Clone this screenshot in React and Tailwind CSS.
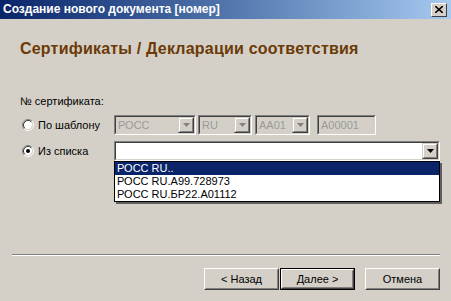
import React from "react";

function Radio({ checked }) {
  return (
    <svg width="12" height="12" viewBox="0 0 12 12" className="shrink-0">
      <circle cx="6" cy="6" r="4.2" fill="#ffffff" />
      <path d="M2.11 9.89 A5.5 5.5 0 0 1 9.89 2.11" stroke="#808080" fill="none" />
      <path d="M9.89 2.11 A5.5 5.5 0 0 1 2.11 9.89" stroke="#ffffff" fill="none" />
      <path d="M2.82 9.18 A4.5 4.5 0 0 1 9.18 2.82" stroke="#404040" fill="none" />
      <path d="M9.18 2.82 A4.5 4.5 0 0 1 2.82 9.18" stroke="#d4d0c8" fill="none" />
      {checked && <circle cx="6" cy="6" r="2" fill="#000000" />}
    </svg>
  );
}

function ArrowBtn({ disabled }) {
  return (
    <div className="w-[16px] h-full border border-t-[#d4d0c8] border-l-[#d4d0c8] border-b-[#404040] border-r-[#404040] shrink-0">
      <div className="w-full h-full bg-[#d4d0c8] border border-t-white border-l-white border-b-[#808080] border-r-[#808080] flex items-center justify-center">
        <svg width="7" height="4" viewBox="0 0 7 4">
          <path d="M0 0 H7 L3.5 4 Z" fill={disabled ? "#808080" : "#000000"} />
        </svg>
      </div>
    </div>
  );
}

function Sunken({ className = "", children, bg = "bg-white" }) {
  return (
    <div className={`h-[20px] border border-t-[#808080] border-l-[#808080] border-b-white border-r-white ${className}`}>
      <div className={`w-full h-full border border-t-[#404040] border-l-[#404040] border-b-[#d4d0c8] border-r-[#d4d0c8] ${bg} flex`}>
        {children}
      </div>
    </div>
  );
}

function DisabledCombo({ w, text }) {
  return (
    <Sunken className={w} bg="bg-[#d4d0c8]">
      <span className="flex-1 pl-[2px] leading-[16px] text-[#9a9a9a]">{text}</span>
      <ArrowBtn disabled />
    </Sunken>
  );
}

function Btn({ children, def }) {
  const inner = (
    <div className="w-full h-full border border-t-white border-l-white border-b-[#404040] border-r-[#404040]">
      <div className="w-full h-full border border-t-[#d4d0c8] border-l-[#d4d0c8] border-b-[#808080] border-r-[#808080] flex items-center justify-center text-black">
        {children}
      </div>
    </div>
  );
  if (def) {
    return <div className="w-[75px] h-[22px] border border-black">{inner}</div>;
  }
  return <div className="w-[75px] h-[22px]">{inner}</div>;
}

export default function App() {
  return (
    <div className="w-[451px] h-[301px] bg-[#d4d0c8] flex flex-col overflow-hidden font-['Liberation_Sans',Arial,sans-serif] text-[11px] text-black">
      <div className="h-[19px] flex items-center justify-between bg-linear-to-r from-[#0a246a] to-[#a6caf0] pl-[3px] pr-[4px] shrink-0">
        <span className="text-white font-bold text-[12px] leading-[19px]">Создание нового документа [номер]</span>
        <div className="w-[16px] h-[14px] border border-t-white border-l-white border-b-[#404040] border-r-[#404040] bg-[#d4d0c8] flex items-center justify-center">
          <svg width="8" height="7" viewBox="0 0 8 7">
            <path d="M0 0 L8 7 M8 0 L0 7" stroke="#000" strokeWidth="1.6" />
          </svg>
        </div>
      </div>

      <div className="pl-[20px] pr-[10px] flex flex-col">
        <div className="mt-[21px] h-[18px] leading-[18px] text-[16px] tracking-[0.2px] font-bold text-[#6b3a07]">
          Сертификаты / Декларации соответствия
        </div>
        <div className="mt-[37px] h-[13px] leading-[13px]">№ сертификата:</div>

        <div className="mt-[7px] flex items-center h-[20px]">
          <div className="w-[94px] flex items-center pl-[2px] gap-[4px]">
            <Radio />
            <span>По шаблону</span>
          </div>
          <DisabledCombo w="w-[82px]" text="РОСС" />
          <div className="w-[2px]" />
          <DisabledCombo w="w-[54px]" text="RU" />
          <div className="w-[3px]" />
          <DisabledCombo w="w-[55px]" text="AA01" />
          <div className="w-[7px]" />
          <Sunken className="w-[59px]" bg="bg-[#d4d0c8]">
            <span className="flex-1 pl-[2px] leading-[16px] text-[#9a9a9a]">A00001</span>
          </Sunken>
        </div>

        <div className="mt-[6px] flex items-center h-[20px]">
          <div className="w-[94px] flex items-center pl-[2px] gap-[4px]">
            <Radio checked />
            <span>Из списка</span>
          </div>
          <div className="relative w-[326px]">
            <Sunken className="w-full">
              <span className="flex-1" />
              <ArrowBtn />
            </Sunken>
            <div className="absolute left-0 top-full w-full bg-white border border-black shadow-[2px_2px_0_#606060] flex flex-col leading-[13px]">
              <div className="bg-[#0a246a] text-white pl-[2px] h-[13px]">РОСС RU..</div>
              <div className="pl-[2px] h-[13px]">РОСС RU.A99.728973</div>
              <div className="pl-[2px] h-[13px]">РОСС RU.БР22.A01112</div>
            </div>
          </div>
        </div>
      </div>

      <div className="flex-1" />
      <div className="mx-[12px] w-[428px] border-t border-t-[#808080] border-b border-b-white" />
      <div className="mt-[12px] mb-[11px] flex justify-end pr-[11px]">
        <Btn>&lt; Назад</Btn>
        <div className="w-[1px]" />
        <Btn def>Далее &gt;</Btn>
        <div className="w-[10px]" />
        <Btn>Отмена</Btn>
      </div>
    </div>
  );
}
